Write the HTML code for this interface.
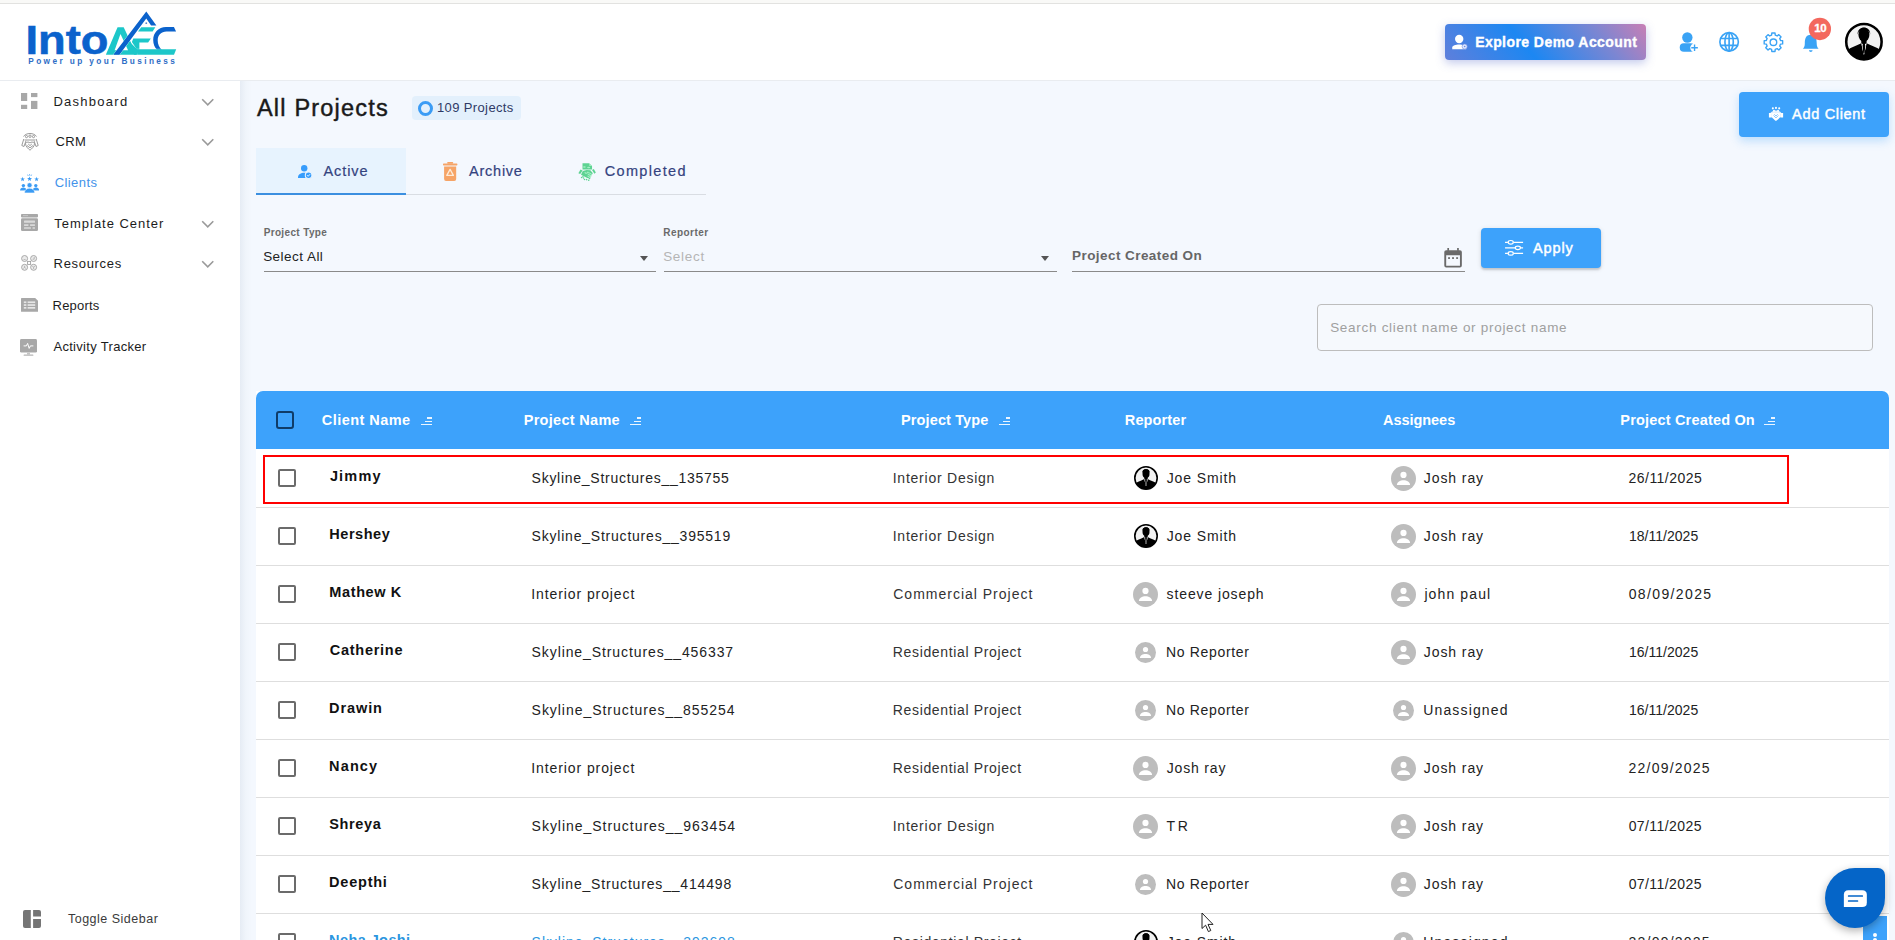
<!DOCTYPE html>
<html lang="en">
<head>
<meta charset="utf-8">
<title>All Projects</title>
<style>
*{box-sizing:border-box;margin:0;padding:0}
html,body{width:1895px;height:940px;overflow:hidden;background:#f4f8fe;font-family:"Liberation Sans",sans-serif;}
.abs{position:absolute}
.tx{position:absolute;white-space:nowrap;height:20px;line-height:20px;}
#topstrip{left:0;top:0;width:1895px;height:4px;background:#f9f9f7;border-bottom:1px solid #e2e2e0}
#header{left:0;top:4px;width:1895px;height:77px;background:#fff;border-bottom:1px solid #e9ecf0}
#sidebar{left:0;top:81px;width:240px;height:859px;background:#fff}
#sideshadow{left:240px;top:81px;width:12px;height:859px;background:linear-gradient(90deg,#e6ecf4 0%,#f0f5fb 50%,#f4f8fe 100%)}
#rightstrip{left:1889px;top:81px;width:6px;height:859px;background:#eef3f9}
.tx{white-space:pre}
#tbl{left:256px;top:391px;width:1633px;height:549px;background:#fff}
#thead{left:256px;top:391px;width:1633px;height:58px;background:#3da2fb;border-radius:7px 7px 0 0}
.rl{position:absolute;left:256px;width:1633px;height:1px;background:#dedede}
.cb{position:absolute;width:18px;height:18px;border:2px solid #6b6b6b;border-radius:2px;background:#fff}
.btn{position:absolute;background:#3da2fb;border-radius:4px;box-shadow:0 2px 6px rgba(62,161,250,.35)}
.ul{position:absolute;height:1px;background:#8a8a8a}
.av{position:absolute;width:26px;height:26px}

</style>
</head>
<body>
<div class="abs" id="topstrip"></div>
<div class="abs" id="header"></div>
<div class="abs" id="sidebar"></div>
<div class="abs" id="sideshadow"></div>
<svg class="abs" style="left:20px;top:5px" width="170" height="70" viewBox="0 0 1895 780" ><text x="62" y="551" font-family="Liberation Sans" font-weight="700" font-size="452" fill="#0b62cc" stroke="#0b62cc" stroke-width="6" textLength="925" lengthAdjust="spacingAndGlyphs">Into</text><text x="92" y="660" font-family="Liberation Sans" font-weight="700" font-size="92" fill="#2f6ec6" textLength="1635" lengthAdjust="spacing">Power up your Business</text></svg><svg class="abs" style="left:100px;top:8px" width="80" height="50" viewBox="0 0 1504 940" ><polygon points="110,880 330,360 445,360 690,880" fill="#1cc7c9"/><polygon points="275,795 385,490 528,795" fill="#fff"/><polygon points="775,360 1040,360 990,440 715,440" fill="#1cc7c9"/><polygon points="625,575 955,575 905,650 740,650 740,790 700,790 600,640" fill="#1cc7c9"/><path d="M1390,355 L1240,355 C1100,355 1000,460 1000,600 C1000,680 1030,740 1075,790 L1165,790 C1115,740 1085,680 1085,610 C1085,510 1150,443 1250,443 L1430,443 Z" fill="#0b62cc"/><polygon points="690,775 1432,775 1392,880 700,880" fill="#1cc7c9" stroke="#fff" stroke-width="10" paint-order="stroke"/><polygon points="560,640 700,775 700,880 640,880" fill="#1cc7c9"/><polygon points="250,880 870,65 1060,330 960,330 870,198 365,880" fill="#0b62cc" stroke="#fff" stroke-width="12" paint-order="stroke"/><circle cx="870" cy="285" r="17" fill="#5a86cc"/></svg>
<div class="abs" style="left:1445px;top:24px;width:201px;height:36px;border-radius:4px;background:linear-gradient(51deg,#5f7fdb 0%,#1c87f2 40%,#7c86d2 76%,#c87fb5 100%);box-shadow:0 3px 10px rgba(80,100,200,.35)"></div>
<svg class="abs" style="left:1440px;top:15px" width="220" height="55" viewBox="0 0 1895 474" ><circle cx="165" cy="207" r="36" fill="#fff"/><path d="M105,295 V280 C105,245 225,245 225,280 V295Z" fill="#fff"/><circle cx="212" cy="272" r="22" fill="#dfe8ff" stroke="#6d8be0" stroke-width="5"/><circle cx="212" cy="272" r="7" fill="#6d8be0"/></svg>
<svg class="abs" style="left:1655px;top:10px" width="240" height="70" viewBox="0 0 1895 553" ><circle cx="255" cy="217" r="41" fill="#3aa3f5"/><rect x="195" y="262" width="118" height="68" rx="32" fill="#3aa3f5"/><circle cx="312" cy="298" r="34" fill="#fff"/><path d="M312,272 V324 M286,298 H338" stroke="#3aa3f5" stroke-width="11" fill="none"/><g fill="none" stroke="#3aa3f5" stroke-width="13"><circle cx="585" cy="252" r="73"/><ellipse cx="585" cy="252" rx="33" ry="73"/><path d="M585,179 V325 M515,225 H655 M515,280 H655"/></g><path d="M922.3,182.1 L947.7,182.1 L949.4,198.8 L964.5,205.1 L977.6,194.5 L995.5,212.4 L984.9,225.5 L991.2,240.6 L1007.9,242.3 L1007.9,267.7 L991.2,269.4 L984.9,284.5 L995.5,297.6 L977.6,315.5 L964.5,304.9 L949.4,311.2 L947.7,327.9 L922.3,327.9 L920.6,311.2 L905.5,304.9 L892.4,315.5 L874.5,297.6 L885.1,284.5 L878.8,269.4 L862.1,267.7 L862.1,242.3 L878.8,240.6 L885.1,225.5 L874.5,212.4 L892.4,194.5 L905.5,205.1 L920.6,198.8Z" fill="none" stroke="#3aa3f5" stroke-width="11" stroke-linejoin="round"/><circle cx="935" cy="255" r="26" fill="none" stroke="#3aa3f5" stroke-width="11"/><path d="M1230,195 C1190,195 1183,230 1183,262 C1183,285 1178,295 1168,307 H1292 C1282,295 1277,285 1277,262 C1277,230 1270,195 1230,195 Z" fill="#3aa3f5"/><path d="M1216,318 H1244 C1244,336 1216,336 1216,318Z" fill="#3aa3f5"/><circle cx="1302" cy="150" r="88" fill="#f3685e"/><clipPath id="c1"><circle cx="1650" cy="250" r="139.9"/></clipPath><circle cx="1650" cy="250" r="139.9" fill="#f2f2f2"/><g clip-path="url(#c1)"><ellipse cx="1650" cy="196.0" rx="43.5" ry="55.5" fill="#000"/><path d="M1600.5,193.0 C1596.0,121.0 1704.0,121.0 1699.5,193.0 L1690.5,167.5 L1609.5,167.5Z" fill="#000"/><rect x="1629.0" y="238.0" width="42.0" height="45.0" fill="#000"/><path d="M1629.0,262.0 L1599.0,277.0 L1545.0,301.0 C1524.0,310.0 1515.0,340.0 1515.0,400.0 L1785.0,400.0 C1785.0,340.0 1776.0,310.0 1755.0,301.0 L1701.0,277.0 L1671.0,262.0 L1650.0,355.0Z" fill="#000"/><path d="M1629.0,262.0 L1647.0,349.0 L1653.0,349.0 L1671.0,262.0 L1659.0,268.0 L1650.0,310.0 L1641.0,268.0Z" fill="#fff"/><path d="M1642.5,268.0 L1657.5,268.0 L1660.5,283.0 L1656.0,337.0 L1650.0,349.0 L1644.0,337.0 L1639.5,283.0Z" fill="#000"/></g><circle cx="1650" cy="250" r="139.9" fill="none" stroke="#000" stroke-width="20.2"/></svg>
<svg class="abs" style="left:21px;top:93px" width="17" height="16" viewBox="0 0 17 16" ><rect x="0" y="0" width="6.2" height="8" fill="#a8a8a8"/><rect x="0" y="11.8" width="6.2" height="4.2" fill="#a8a8a8"/><rect x="10" y="0" width="6.4" height="4.1" fill="#a8a8a8"/><rect x="10" y="7.9" width="6.4" height="8.1" fill="#a8a8a8"/></svg>
<svg class="abs" style="left:21px;top:131px" width="18" height="21" viewBox="0 0 18 21" ><g fill="none" stroke="#8f8f8f" stroke-width="0.9"><path d="M2.5,5.5 C5,1.5 13,1.5 15.5,5.5"/><circle cx="5.5" cy="5.6" r="1.1"/><circle cx="9" cy="5.2" r="1.2"/><circle cx="12.5" cy="5.6" r="1.1"/><path d="M3.6,9 H14.4"/><path d="M2.8,8 L0.8,14.5 L3,15.5 L5,9.8 M15.2,8 L17.2,14.5 L15,15.5 L13,9.8"/><path d="M4.5,12.5 C6,10.5 8,10.8 9,12 C10,10.8 12,10.5 13.5,12.5 C13.5,15.5 10.5,18 9,19.2 C7.5,18 4.5,15.5 4.5,12.5Z"/><path d="M6,14.5 L9,16.8 L12,14.5 M7.2,13 L9,14.6 L10.8,13"/></g></svg>
<svg class="abs" style="left:20px;top:173.7px" width="19.2" height="19" viewBox="0 0 19.2 19" ><polygon points="2.60,2.80 3.19,4.38 4.88,4.46 3.56,5.51 4.01,7.14 2.60,6.21 1.19,7.14 1.64,5.51 0.32,4.46 2.01,4.38" fill="#3a9bf4"/><polygon points="9.60,2.40 10.24,4.12 12.07,4.20 10.64,5.34 11.13,7.10 9.60,6.09 8.07,7.10 8.56,5.34 7.13,4.20 8.96,4.12" fill="#3a9bf4"/><polygon points="16.60,2.80 17.19,4.38 18.88,4.46 17.56,5.51 18.01,7.14 16.60,6.21 15.19,7.14 15.64,5.51 14.32,4.46 16.01,4.38" fill="#3a9bf4"/><path d="M9.6,0 V1.6 M7.6,0.6 L8.3,2 M11.6,0.6 L10.9,2" stroke="#3a9bf4" stroke-width="0.7" fill="none"/><circle cx="3.4" cy="11.6" r="1.7" fill="#3a9bf4"/><path d="M0,16.6 C0,12.6 6.6,12.6 6.6,16.6Z" fill="#3a9bf4"/><circle cx="15.8" cy="11.6" r="1.7" fill="#3a9bf4"/><path d="M12.6,16.6 C12.6,12.6 19.2,12.6 19.2,16.6Z" fill="#3a9bf4"/><circle cx="9.6" cy="11.2" r="2.5" fill="#3a9bf4" stroke="#fff" stroke-width="0.6"/><path d="M4.4,19 C4.4,12.6 14.8,12.6 14.8,19Z" fill="#3a9bf4" stroke="#fff" stroke-width="0.6"/></svg>
<svg class="abs" style="left:20.6px;top:214px" width="17" height="17" viewBox="0 0 17 17" ><rect x="0" y="0" width="17" height="3.4" rx="0.8" fill="#a8a8a8"/><rect x="2" y="1.2" width="5" height="0.9" fill="#c9c9c9"/><rect x="0" y="4.3" width="17" height="12.7" rx="1.2" fill="#a8a8a8"/><rect x="3" y="6.6" width="11" height="2.2" rx="0.5" fill="#d9d9d9"/><rect x="3" y="10.2" width="4.5" height="1.8" rx="0.4" fill="#d9d9d9"/><rect x="9" y="10.2" width="5" height="1.8" rx="0.4" fill="#d9d9d9"/><rect x="3" y="13.2" width="7" height="1.6" rx="0.4" fill="#d9d9d9"/><rect x="11.5" y="13.2" width="2.5" height="1.6" rx="0.4" fill="#d9d9d9"/></svg>
<svg class="abs" style="left:21px;top:255px" width="17" height="16" viewBox="0 0 17 16" ><g fill="#ececec" stroke="#a0a0a0" stroke-width="0.9"><circle cx="3.6" cy="3.5" r="3"/><circle cx="12.6" cy="3.5" r="3"/><circle cx="3.6" cy="12.3" r="3"/><circle cx="12.6" cy="12.3" r="3"/><rect x="6.6" y="6.4" width="3" height="3" fill="#fff"/></g><g stroke="#a0a0a0" stroke-width="0.7" fill="none"><path d="M2.4,3 h0.1 M4.6,3 h0.1 M2.6,4.6 h2"/><path d="M13.2,2 v2.2 h-1.6"/><path d="M3.6,10.8 v1.6 l-1.3,1 M3.6,12.4 l1.3,1"/><path d="M11.4,11 l1.2,1.4 l1.2,-1.4 M12.6,12.4 v1.6"/></g></svg>
<svg class="abs" style="left:21px;top:298.3px" width="17.2" height="13.8" viewBox="0 0 17.2 13.8" ><path d="M0.6,0 H14.2 L17.2,3 V13.2 Q17.2,13.8 16.6,13.8 H0.6 Q0,13.8 0,13.2 V0.6 Q0,0 0.6,0Z" fill="#a8a8a8"/><g fill="#e6e6e6"><rect x="2.8" y="3.4" width="2.6" height="1.7"/><rect x="6.6" y="3.4" width="7.6" height="1.7"/><rect x="2.8" y="6.2" width="2.6" height="1.7"/><rect x="6.6" y="6.2" width="7.6" height="1.7"/><rect x="2.8" y="9" width="2.6" height="1.7"/><rect x="6.6" y="9" width="7.6" height="1.7"/></g></svg>
<svg class="abs" style="left:20.2px;top:338.6px" width="17.2" height="17.2" viewBox="0 0 17.2 17.2" ><rect x="0" y="0" width="17" height="13.6" rx="1.4" fill="#a8a8a8"/><path d="M3.6,6.9 H6.4 L7.6,4.4 L9.2,9.4 L10.4,6.9 H13.4" stroke="#fff" stroke-width="1" fill="none" stroke-linejoin="round"/><rect x="7" y="13.6" width="3" height="2" fill="#c4c4c4"/><rect x="3.6" y="15.6" width="9.8" height="1.2" rx="0.5" fill="#b5b5b5"/></svg>
<svg class="abs" style="left:200.9px;top:98.0px" width="13.5" height="8.4" viewBox="0 0 13.5 8.4" ><path d="M1.2,1.2 L6.75,6.8 L12.3,1.2" fill="none" stroke="#9a9a9a" stroke-width="1.6"/></svg>
<svg class="abs" style="left:200.9px;top:138.0px" width="13.5" height="8.4" viewBox="0 0 13.5 8.4" ><path d="M1.2,1.2 L6.75,6.8 L12.3,1.2" fill="none" stroke="#9a9a9a" stroke-width="1.6"/></svg>
<svg class="abs" style="left:200.9px;top:220.0px" width="13.5" height="8.4" viewBox="0 0 13.5 8.4" ><path d="M1.2,1.2 L6.75,6.8 L12.3,1.2" fill="none" stroke="#9a9a9a" stroke-width="1.6"/></svg>
<svg class="abs" style="left:200.9px;top:260.0px" width="13.5" height="8.4" viewBox="0 0 13.5 8.4" ><path d="M1.2,1.2 L6.75,6.8 L12.3,1.2" fill="none" stroke="#9a9a9a" stroke-width="1.6"/></svg>
<svg class="abs" style="left:23px;top:910px" width="18" height="18" viewBox="0 0 18 18" ><path d="M2,0 H7.8 V18 H2 Q0,18 0,16 V2 Q0,0 2,0Z" fill="#757575"/><path d="M10.1,0 H16 Q18,0 18,2 V6.5 H10.1Z" fill="#757575"/><path d="M10.1,9 H18 V16 Q18,18 16,18 H10.1Z" fill="#757575"/></svg>
<div class="abs" id="tbl"></div><div class="abs" id="thead"></div>
<div class="rl" style="top:507px"></div>
<div class="rl" style="top:565px"></div>
<div class="rl" style="top:623px"></div>
<div class="rl" style="top:681px"></div>
<div class="rl" style="top:739px"></div>
<div class="rl" style="top:797px"></div>
<div class="rl" style="top:855px"></div>
<div class="rl" style="top:913px"></div>
<div class="cb" style="left:276px;top:411px;background:transparent;border-color:#0f3c68;border-radius:3px"></div>
<div class="cb" style="left:278px;top:469px"></div>
<div class="cb" style="left:278px;top:527px"></div>
<div class="cb" style="left:278px;top:585px"></div>
<div class="cb" style="left:278px;top:643px"></div>
<div class="cb" style="left:278px;top:701px"></div>
<div class="cb" style="left:278px;top:759px"></div>
<div class="cb" style="left:278px;top:817px"></div>
<div class="cb" style="left:278px;top:875px"></div>
<div class="cb" style="left:278px;top:933px"></div>
<div class="abs" style="left:420.6px;top:424.1px;width:11px;height:1.4px;background:#eaf5ff"></div><div class="abs" style="left:424.6px;top:420.70000000000005px;width:7px;height:1.4px;background:#eaf5ff"></div><div class="abs" style="left:427.3px;top:417.3px;width:4.3px;height:1.4px;background:#eaf5ff"></div>
<div class="abs" style="left:629.8px;top:424.1px;width:11px;height:1.4px;background:#eaf5ff"></div><div class="abs" style="left:633.8px;top:420.70000000000005px;width:7px;height:1.4px;background:#eaf5ff"></div><div class="abs" style="left:636.5px;top:417.3px;width:4.3px;height:1.4px;background:#eaf5ff"></div>
<div class="abs" style="left:999px;top:424.1px;width:11px;height:1.4px;background:#eaf5ff"></div><div class="abs" style="left:1003px;top:420.70000000000005px;width:7px;height:1.4px;background:#eaf5ff"></div><div class="abs" style="left:1005.7px;top:417.3px;width:4.3px;height:1.4px;background:#eaf5ff"></div>
<div class="abs" style="left:1764.3px;top:424.1px;width:11px;height:1.4px;background:#eaf5ff"></div><div class="abs" style="left:1768.3px;top:420.70000000000005px;width:7px;height:1.4px;background:#eaf5ff"></div><div class="abs" style="left:1771.0px;top:417.3px;width:4.3px;height:1.4px;background:#eaf5ff"></div>
<svg class="abs" style="left:1133.6px;top:466.2px" width="24" height="24" viewBox="1133.6 466.2 24 24" ><clipPath id="c2"><circle cx="1145.6" cy="478.2" r="11.2"/></clipPath><circle cx="1145.6" cy="478.2" r="11.2" fill="#f2f2f2"/><g clip-path="url(#c2)"><ellipse cx="1145.6" cy="473.9" rx="3.5" ry="4.4" fill="#000"/><path d="M1141.6,473.6 C1141.3,467.9 1149.9,467.9 1149.6,473.6 L1148.8,471.6 L1142.4,471.6Z" fill="#000"/><rect x="1143.9" y="477.2" width="3.4" height="3.6" fill="#000"/><path d="M1143.9,479.2 L1141.5,480.4 L1137.2,482.3 C1135.5,483.0 1134.8,485.4 1134.8,490.2 L1156.4,490.2 C1156.4,485.4 1155.7,483.0 1154.0,482.3 L1149.7,480.4 L1147.3,479.2 L1145.6,486.6Z" fill="#000"/><path d="M1143.9,479.2 L1145.4,486.1 L1145.8,486.1 L1147.3,479.2 L1146.3,479.6 L1145.6,483.0 L1144.9,479.6Z" fill="#fff"/><path d="M1145.0,479.6 L1146.2,479.6 L1146.4,480.8 L1146.1,485.2 L1145.6,486.1 L1145.1,485.2 L1144.8,480.8Z" fill="#000"/></g><circle cx="1145.6" cy="478.2" r="11.2" fill="none" stroke="#000" stroke-width="1.6"/></svg>
<svg class="abs" style="left:1391.0px;top:466.0px" width="25" height="25" viewBox="1391.0 466.0 25 25" ><circle cx="1403.5" cy="478.5" r="12.5" fill="#bdbdbd"/><circle cx="1403.5" cy="474.90" r="3.10" fill="#fff"/><path d="M1396.90,485.10 C1396.90,478.70 1410.10,478.70 1410.10,485.10Z" fill="#fff"/></svg>
<svg class="abs" style="left:1133.6px;top:524.2px" width="24" height="24" viewBox="1133.6 524.2 24 24" ><clipPath id="c3"><circle cx="1145.6" cy="536.2" r="11.2"/></clipPath><circle cx="1145.6" cy="536.2" r="11.2" fill="#f2f2f2"/><g clip-path="url(#c3)"><ellipse cx="1145.6" cy="531.9" rx="3.5" ry="4.4" fill="#000"/><path d="M1141.6,531.6 C1141.3,525.9 1149.9,525.9 1149.6,531.6 L1148.8,529.6 L1142.4,529.6Z" fill="#000"/><rect x="1143.9" y="535.2" width="3.4" height="3.6" fill="#000"/><path d="M1143.9,537.2 L1141.5,538.4 L1137.2,540.3 C1135.5,541.0 1134.8,543.4 1134.8,548.2 L1156.4,548.2 C1156.4,543.4 1155.7,541.0 1154.0,540.3 L1149.7,538.4 L1147.3,537.2 L1145.6,544.6Z" fill="#000"/><path d="M1143.9,537.2 L1145.4,544.1 L1145.8,544.1 L1147.3,537.2 L1146.3,537.6 L1145.6,541.0 L1144.9,537.6Z" fill="#fff"/><path d="M1145.0,537.6 L1146.2,537.6 L1146.4,538.8 L1146.1,543.2 L1145.6,544.1 L1145.1,543.2 L1144.8,538.8Z" fill="#000"/></g><circle cx="1145.6" cy="536.2" r="11.2" fill="none" stroke="#000" stroke-width="1.6"/></svg>
<svg class="abs" style="left:1391.0px;top:524.0px" width="25" height="25" viewBox="1391.0 524.0 25 25" ><circle cx="1403.5" cy="536.5" r="12.5" fill="#bdbdbd"/><circle cx="1403.5" cy="532.90" r="3.10" fill="#fff"/><path d="M1396.90,543.10 C1396.90,536.70 1410.10,536.70 1410.10,543.10Z" fill="#fff"/></svg>
<svg class="abs" style="left:1133.0px;top:582.0px" width="25" height="25" viewBox="1133.0 582.0 25 25" ><circle cx="1145.5" cy="594.5" r="12.5" fill="#bdbdbd"/><circle cx="1145.5" cy="590.90" r="3.10" fill="#fff"/><path d="M1138.90,601.10 C1138.90,594.70 1152.10,594.70 1152.10,601.10Z" fill="#fff"/></svg>
<svg class="abs" style="left:1391.0px;top:582.0px" width="25" height="25" viewBox="1391.0 582.0 25 25" ><circle cx="1403.5" cy="594.5" r="12.5" fill="#bdbdbd"/><circle cx="1403.5" cy="590.90" r="3.10" fill="#fff"/><path d="M1396.90,601.10 C1396.90,594.70 1410.10,594.70 1410.10,601.10Z" fill="#fff"/></svg>
<svg class="abs" style="left:1135.0px;top:642.0px" width="21" height="21" viewBox="1135.0 642.0 21 21" ><circle cx="1145.5" cy="652.5" r="10.5" fill="#bdbdbd"/><circle cx="1145.5" cy="649.48" r="2.60" fill="#fff"/><path d="M1139.96,658.04 C1139.96,652.67 1151.04,652.67 1151.04,658.04Z" fill="#fff"/></svg>
<svg class="abs" style="left:1391.0px;top:640.0px" width="25" height="25" viewBox="1391.0 640.0 25 25" ><circle cx="1403.5" cy="652.5" r="12.5" fill="#bdbdbd"/><circle cx="1403.5" cy="648.90" r="3.10" fill="#fff"/><path d="M1396.90,659.10 C1396.90,652.70 1410.10,652.70 1410.10,659.10Z" fill="#fff"/></svg>
<svg class="abs" style="left:1135.0px;top:700.0px" width="21" height="21" viewBox="1135.0 700.0 21 21" ><circle cx="1145.5" cy="710.5" r="10.5" fill="#bdbdbd"/><circle cx="1145.5" cy="707.48" r="2.60" fill="#fff"/><path d="M1139.96,716.04 C1139.96,710.67 1151.04,710.67 1151.04,716.04Z" fill="#fff"/></svg>
<svg class="abs" style="left:1393.0px;top:700.0px" width="21" height="21" viewBox="1393.0 700.0 21 21" ><circle cx="1403.5" cy="710.5" r="10.5" fill="#bdbdbd"/><circle cx="1403.5" cy="707.48" r="2.60" fill="#fff"/><path d="M1397.96,716.04 C1397.96,710.67 1409.04,710.67 1409.04,716.04Z" fill="#fff"/></svg>
<svg class="abs" style="left:1133.0px;top:756.0px" width="25" height="25" viewBox="1133.0 756.0 25 25" ><circle cx="1145.5" cy="768.5" r="12.5" fill="#bdbdbd"/><circle cx="1145.5" cy="764.90" r="3.10" fill="#fff"/><path d="M1138.90,775.10 C1138.90,768.70 1152.10,768.70 1152.10,775.10Z" fill="#fff"/></svg>
<svg class="abs" style="left:1391.0px;top:756.0px" width="25" height="25" viewBox="1391.0 756.0 25 25" ><circle cx="1403.5" cy="768.5" r="12.5" fill="#bdbdbd"/><circle cx="1403.5" cy="764.90" r="3.10" fill="#fff"/><path d="M1396.90,775.10 C1396.90,768.70 1410.10,768.70 1410.10,775.10Z" fill="#fff"/></svg>
<svg class="abs" style="left:1133.0px;top:814.0px" width="25" height="25" viewBox="1133.0 814.0 25 25" ><circle cx="1145.5" cy="826.5" r="12.5" fill="#bdbdbd"/><circle cx="1145.5" cy="822.90" r="3.10" fill="#fff"/><path d="M1138.90,833.10 C1138.90,826.70 1152.10,826.70 1152.10,833.10Z" fill="#fff"/></svg>
<svg class="abs" style="left:1391.0px;top:814.0px" width="25" height="25" viewBox="1391.0 814.0 25 25" ><circle cx="1403.5" cy="826.5" r="12.5" fill="#bdbdbd"/><circle cx="1403.5" cy="822.90" r="3.10" fill="#fff"/><path d="M1396.90,833.10 C1396.90,826.70 1410.10,826.70 1410.10,833.10Z" fill="#fff"/></svg>
<svg class="abs" style="left:1135.0px;top:874.0px" width="21" height="21" viewBox="1135.0 874.0 21 21" ><circle cx="1145.5" cy="884.5" r="10.5" fill="#bdbdbd"/><circle cx="1145.5" cy="881.48" r="2.60" fill="#fff"/><path d="M1139.96,890.04 C1139.96,884.67 1151.04,884.67 1151.04,890.04Z" fill="#fff"/></svg>
<svg class="abs" style="left:1391.0px;top:872.0px" width="25" height="25" viewBox="1391.0 872.0 25 25" ><circle cx="1403.5" cy="884.5" r="12.5" fill="#bdbdbd"/><circle cx="1403.5" cy="880.90" r="3.10" fill="#fff"/><path d="M1396.90,891.10 C1396.90,884.70 1410.10,884.70 1410.10,891.10Z" fill="#fff"/></svg>
<svg class="abs" style="left:1133.6px;top:930.2px" width="24" height="24" viewBox="1133.6 930.2 24 24" ><clipPath id="c4"><circle cx="1145.6" cy="942.2" r="11.2"/></clipPath><circle cx="1145.6" cy="942.2" r="11.2" fill="#f2f2f2"/><g clip-path="url(#c4)"><ellipse cx="1145.6" cy="937.9" rx="3.5" ry="4.4" fill="#000"/><path d="M1141.6,937.6 C1141.3,931.9 1149.9,931.9 1149.6,937.6 L1148.8,935.6 L1142.4,935.6Z" fill="#000"/><rect x="1143.9" y="941.2" width="3.4" height="3.6" fill="#000"/><path d="M1143.9,943.2 L1141.5,944.4 L1137.2,946.3 C1135.5,947.0 1134.8,949.4 1134.8,954.2 L1156.4,954.2 C1156.4,949.4 1155.7,947.0 1154.0,946.3 L1149.7,944.4 L1147.3,943.2 L1145.6,950.6Z" fill="#000"/><path d="M1143.9,943.2 L1145.4,950.1 L1145.8,950.1 L1147.3,943.2 L1146.3,943.6 L1145.6,947.0 L1144.9,943.6Z" fill="#fff"/><path d="M1145.0,943.6 L1146.2,943.6 L1146.4,944.8 L1146.1,949.2 L1145.6,950.1 L1145.1,949.2 L1144.8,944.8Z" fill="#000"/></g><circle cx="1145.6" cy="942.2" r="11.2" fill="none" stroke="#000" stroke-width="1.6"/></svg>
<svg class="abs" style="left:1393.0px;top:932.0px" width="21" height="21" viewBox="1393.0 932.0 21 21" ><circle cx="1403.5" cy="942.5" r="10.5" fill="#bdbdbd"/><circle cx="1403.5" cy="939.48" r="2.60" fill="#fff"/><path d="M1397.96,948.04 C1397.96,942.67 1409.04,942.67 1409.04,948.04Z" fill="#fff"/></svg>
<div class="abs" style="left:263px;top:455px;width:1526px;height:49px;border:2px solid #f00"></div>
<div class="btn" style="left:1739px;top:92px;width:150px;height:45px;box-shadow:0 4px 10px rgba(62,161,250,.3)"></div>
<svg class="abs" style="left:1730px;top:85px" width="165" height="60" viewBox="0 0 1895 689" ><circle cx="492" cy="268" r="12" fill="#fff"/><circle cx="528" cy="263" r="12" fill="#fff"/><circle cx="565" cy="268" r="12" fill="#fff"/><circle cx="505" cy="296" r="11" fill="#fff"/><circle cx="552" cy="296" r="11" fill="#fff"/><path d="M462,334 C462,305 500,292 528,292 C556,292 594,305 594,334Z" fill="#fff" opacity="0.85"/><path d="M447,322 H480 V372 H447Z M577,322 H610 V372 H577Z" fill="#fff"/><path d="M478,330 C500,312 515,318 528,330 C541,318 556,312 578,330 L582,362 C565,385 545,402 528,414 C511,402 491,385 474,362Z" fill="#fff"/><path d="M500,350 L528,378 L556,350 M508,336 L528,356 L548,336" stroke="#3da2fb" stroke-width="7" fill="none"/></svg>
<div class="btn" style="left:1481px;top:228px;width:120px;height:40px;box-shadow:0 2px 2px rgba(0,0,0,.14),0 1px 5px rgba(0,0,0,.12)"></div>
<svg class="abs" style="left:1430px;top:220px" width="180" height="60" viewBox="0 0 1895 632" ><g stroke="#fff" stroke-width="13" fill="none"><path d="M790,235 H820 M880,235 H980"/><ellipse cx="850" cy="235" rx="27" ry="19" fill="#3da2fb"/><path d="M790,293 H895 M955,293 H980"/><ellipse cx="925" cy="293" rx="27" ry="19" fill="#3da2fb"/><path d="M790,352 H820 M880,352 H980"/><ellipse cx="850" cy="352" rx="27" ry="19" fill="#3da2fb"/></g><path d="M170,318 H315 Q335,318 335,338 V480 Q335,500 315,500 H170 Q150,500 150,480 V338 Q150,318 170,318Z M170,372 V482 H315 V372Z" fill="#6a6a6a" fill-rule="evenodd"/><rect x="182" y="295" width="18" height="30" fill="#6a6a6a"/><rect x="285" y="295" width="18" height="30" fill="#6a6a6a"/><rect x="190" y="392" width="20" height="18" fill="#6a6a6a"/><rect x="232" y="392" width="20" height="18" fill="#6a6a6a"/><rect x="275" y="392" width="20" height="18" fill="#6a6a6a"/></svg>
<div class="abs" style="left:412px;top:96px;width:109px;height:23.5px;border-radius:4px;background:#e3f0fc"></div>
<div class="abs" style="left:417.5px;top:100.5px;width:15px;height:15px;border-radius:50%;border:3.2px solid #3b9cf5"></div>
<div class="abs" style="left:256px;top:148px;width:150px;height:47px;background:#e7f3fe"></div>
<div class="abs" style="left:256px;top:194px;width:450px;height:1px;background:#d9dde3"></div>
<div class="abs" style="left:256px;top:192.5px;width:150px;height:2.8px;background:#3b8fe0"></div>
<svg class="abs" style="left:298px;top:165.2px" width="14" height="13.4" viewBox="0 0 14 13.4" ><circle cx="6.2" cy="3.3" r="3.2" fill="#369cfc"/><path d="M0,12.2 C0,6.2 12.4,6.2 12.4,12.2 V13 H0Z" fill="#369cfc"/><circle cx="10.6" cy="10.2" r="3.3" fill="#369cfc" stroke="#e7f3fe" stroke-width="1.1"/><path d="M9.1,10.2 L10.2,11.3 L12.1,9.2" stroke="#fff" stroke-width="0.9" fill="none"/></svg>
<svg class="abs" style="left:443px;top:161.8px" width="14.6" height="19" viewBox="0 0 14.6 19" ><rect x="0" y="1.4" width="14.4" height="2" rx="0.7" fill="#f6a467"/><rect x="4.2" y="0" width="6" height="1.8" rx="0.7" fill="#f6a467"/><path d="M1.1,4.4 H13.2 V17 Q13.2,18.9 11.3,18.9 H3 Q1.1,18.9 1.1,17Z" fill="#f6a467"/><path d="M7.1,7.4 L10.4,13.4 H3.8Z" fill="none" stroke="#fdebd8" stroke-width="1.3" stroke-linejoin="round"/></svg>
<svg class="abs" style="left:570px;top:156px" width="40" height="30" viewBox="0 0 1253 940" ><path d="M392,225 H600 L690,315 V420 H392Z" fill="#5ed392"/><path d="M605,235 L680,310 H605Z" fill="#a6efc6"/><ellipse cx="450" cy="345" rx="45" ry="22" fill="#a6efc6"/><ellipse cx="585" cy="360" rx="50" ry="22" fill="#a6efc6"/><path d="M330,425 L395,455 L320,565 L262,540Z" fill="#5ed392"/><path d="M745,405 L810,520 L765,560 L690,440Z" fill="#5ed392"/><path d="M400,470 L520,440 L640,450 L715,540 L600,700 L540,690 L345,585Z" fill="#5ed392"/><path d="M470,520 C500,560 540,540 560,500 M590,520 L680,575 M570,570 L660,625 M560,630 L640,680" stroke="#a6efc6" stroke-width="34" fill="none" stroke-linecap="round"/><g fill="#5ed392"><circle cx="365" cy="675" r="26"/><circle cx="405" cy="640" r="22"/><circle cx="425" cy="690" r="24"/><circle cx="455" cy="735" r="24"/><circle cx="520" cy="740" r="24"/><circle cx="585" cy="760" r="26"/><circle cx="610" cy="705" r="24"/></g></svg>
<div class="ul" style="left:264px;top:270.5px;width:391.5px"></div>
<div class="ul" style="left:664px;top:270.5px;width:393px"></div>
<div class="ul" style="left:1072px;top:271px;width:393px"></div>
<div class="abs" style="left:639.5px;top:255.6px;width:0;height:0;border-left:4.5px solid transparent;border-right:4.5px solid transparent;border-top:5px solid #555"></div>
<div class="abs" style="left:1040.5px;top:255.6px;width:0;height:0;border-left:4.5px solid transparent;border-right:4.5px solid transparent;border-top:5px solid #555"></div>
<div class="abs" style="left:1317px;top:304px;width:556px;height:47px;border:1px solid #bdbdbd;border-radius:4px;background:#f6f9fd"></div>
<div class="tx" style="left:53.38px;top:92.00px;font-size:13px;font-weight:400;color:#1c1c1c;letter-spacing:1.269px">Dashboard</div>
<div class="tx" style="left:55.45px;top:132.00px;font-size:13px;font-weight:400;color:#1c1c1c;letter-spacing:0.421px">CRM</div>
<div class="tx" style="left:54.64px;top:173.00px;font-size:13px;font-weight:400;color:#4393ea;letter-spacing:0.434px">Clients</div>
<div class="tx" style="left:54.33px;top:214.00px;font-size:13px;font-weight:400;color:#1c1c1c;letter-spacing:0.977px">Template Center</div>
<div class="tx" style="left:53.62px;top:254.00px;font-size:13px;font-weight:400;color:#1c1c1c;letter-spacing:0.677px">Resources</div>
<div class="tx" style="left:52.62px;top:296.00px;font-size:13px;font-weight:400;color:#1c1c1c;letter-spacing:0.196px">Reports</div>
<div class="tx" style="left:53.41px;top:337.00px;font-size:13px;font-weight:400;color:#1c1c1c;letter-spacing:0.308px">Activity Tracker</div>
<div class="tx" style="left:67.94px;top:909.00px;font-size:12.5px;font-weight:400;color:#3a3a3a;letter-spacing:0.500px">Toggle Sidebar</div>
<div class="tx" style="left:1475.13px;top:32.00px;font-size:14px;font-weight:700;color:#ffffff;letter-spacing:0.438px;-webkit-text-stroke:0.35px #ffffff">Explore Demo Account</div>
<div class="tx" style="left:1814.34px;top:18.00px;font-size:11.5px;font-weight:700;color:#ffffff;letter-spacing:-0.490px;-webkit-text-stroke:0.3px #ffffff">10</div>
<div class="tx" style="left:257.00px;top:98.00px;font-size:23.5px;font-weight:400;color:#1a1a1a;letter-spacing:1.194px;-webkit-text-stroke:0.45px #1a1a1a">All Projects</div>
<div class="tx" style="left:436.99px;top:98.00px;font-size:13px;font-weight:400;color:#2f3a66;letter-spacing:0.372px">109 Projects</div>
<div class="tx" style="left:1792.05px;top:104.00px;font-size:14.5px;font-weight:400;color:#ffffff;letter-spacing:0.689px;-webkit-text-stroke:0.45px #ffffff">Add Client</div>
<div class="tx" style="left:323.39px;top:161.00px;font-size:14.5px;font-weight:400;color:#34437f;letter-spacing:0.935px;-webkit-text-stroke:0.2px #34437f">Active</div>
<div class="tx" style="left:469.09px;top:161.00px;font-size:14.5px;font-weight:400;color:#34437f;letter-spacing:0.747px;-webkit-text-stroke:0.2px #34437f">Archive</div>
<div class="tx" style="left:604.69px;top:161.00px;font-size:14.5px;font-weight:400;color:#34437f;letter-spacing:1.332px;-webkit-text-stroke:0.2px #34437f">Completed</div>
<div class="tx" style="left:263.63px;top:223.00px;font-size:10px;font-weight:700;color:#6a6a6a;letter-spacing:0.359px">Project Type</div>
<div class="tx" style="left:263.17px;top:247.00px;font-size:13.5px;font-weight:400;color:#222;letter-spacing:0.461px">Select All</div>
<div class="tx" style="left:663.32px;top:223.00px;font-size:10px;font-weight:700;color:#6a6a6a;letter-spacing:0.451px">Reporter</div>
<div class="tx" style="left:663.17px;top:247.00px;font-size:13.5px;font-weight:400;color:#b5b5b5;letter-spacing:0.691px">Select</div>
<div class="tx" style="left:1072.01px;top:246.00px;font-size:13.5px;font-weight:700;color:#666;letter-spacing:0.437px">Project Created On</div>
<div class="tx" style="left:1533.05px;top:238.00px;font-size:14.5px;font-weight:400;color:#ffffff;letter-spacing:0.867px;-webkit-text-stroke:0.45px #ffffff">Apply</div>
<div class="tx" style="left:1330.17px;top:318.00px;font-size:13.5px;font-weight:400;color:#a0a0a0;letter-spacing:0.707px">Search client name or project name</div>
<div class="tx" style="left:321.87px;top:410.00px;font-size:14.5px;font-weight:700;color:#fff;letter-spacing:0.451px">Client Name</div>
<div class="tx" style="left:523.72px;top:410.00px;font-size:14.5px;font-weight:700;color:#fff;letter-spacing:0.296px">Project Name</div>
<div class="tx" style="left:901.01px;top:410.00px;font-size:14.5px;font-weight:700;color:#fff;letter-spacing:0.128px">Project Type</div>
<div class="tx" style="left:1124.83px;top:410.00px;font-size:14.5px;font-weight:700;color:#fff;letter-spacing:0.112px">Reporter</div>
<div class="tx" style="left:1383.04px;top:410.00px;font-size:14.5px;font-weight:700;color:#fff;letter-spacing:-0.045px">Assignees</div>
<div class="tx" style="left:1620.37px;top:410.00px;font-size:14.5px;font-weight:700;color:#fff;letter-spacing:0.176px">Project Created On</div>
<div class="tx" style="left:329.89px;top:466.00px;font-size:14.5px;font-weight:700;color:#111;letter-spacing:1.182px">Jimmy</div>
<div class="tx" style="left:531.60px;top:468.00px;font-size:14px;font-weight:400;color:#222;letter-spacing:0.731px">Skyline_Structures__135755</div>
<div class="tx" style="left:892.73px;top:468.00px;font-size:14px;font-weight:400;color:#333;letter-spacing:0.759px">Interior Design</div>
<div class="tx" style="left:1166.73px;top:468.00px;font-size:14px;font-weight:400;color:#222;letter-spacing:0.896px">Joe Smith</div>
<div class="tx" style="left:1423.82px;top:468.00px;font-size:14px;font-weight:400;color:#222;letter-spacing:0.912px">Josh ray</div>
<div class="tx" style="left:1628.57px;top:468.00px;font-size:14px;font-weight:400;color:#222;letter-spacing:0.460px">26/11/2025</div>
<div class="tx" style="left:329.33px;top:524.00px;font-size:14.5px;font-weight:700;color:#111;letter-spacing:0.538px">Hershey</div>
<div class="tx" style="left:531.60px;top:526.00px;font-size:14px;font-weight:400;color:#222;letter-spacing:0.784px">Skyline_Structures__395519</div>
<div class="tx" style="left:892.73px;top:526.00px;font-size:14px;font-weight:400;color:#333;letter-spacing:0.759px">Interior Design</div>
<div class="tx" style="left:1166.73px;top:526.00px;font-size:14px;font-weight:400;color:#222;letter-spacing:0.896px">Joe Smith</div>
<div class="tx" style="left:1423.82px;top:526.00px;font-size:14px;font-weight:400;color:#222;letter-spacing:0.912px">Josh ray</div>
<div class="tx" style="left:1628.91px;top:526.00px;font-size:14px;font-weight:400;color:#222;letter-spacing:0.028px">18/11/2025</div>
<div class="tx" style="left:329.33px;top:582.00px;font-size:14.5px;font-weight:700;color:#111;letter-spacing:0.615px">Mathew K</div>
<div class="tx" style="left:531.33px;top:584.00px;font-size:14px;font-weight:400;color:#222;letter-spacing:0.900px">Interior project</div>
<div class="tx" style="left:893.25px;top:584.00px;font-size:14px;font-weight:400;color:#333;letter-spacing:0.996px">Commercial Project</div>
<div class="tx" style="left:1166.58px;top:584.00px;font-size:14px;font-weight:400;color:#222;letter-spacing:0.889px">steeve joseph</div>
<div class="tx" style="left:1424.39px;top:584.00px;font-size:14px;font-weight:400;color:#222;letter-spacing:1.118px">john paul</div>
<div class="tx" style="left:1628.65px;top:584.00px;font-size:14px;font-weight:400;color:#222;letter-spacing:1.381px">08/09/2025</div>
<div class="tx" style="left:329.71px;top:640.00px;font-size:14.5px;font-weight:700;color:#111;letter-spacing:0.740px">Catherine</div>
<div class="tx" style="left:531.60px;top:642.00px;font-size:14px;font-weight:400;color:#222;letter-spacing:0.901px">Skyline_Structures__456337</div>
<div class="tx" style="left:892.80px;top:642.00px;font-size:14px;font-weight:400;color:#333;letter-spacing:0.644px">Residential Project</div>
<div class="tx" style="left:1166.06px;top:642.00px;font-size:14px;font-weight:400;color:#222;letter-spacing:0.659px">No Reporter</div>
<div class="tx" style="left:1423.82px;top:642.00px;font-size:14px;font-weight:400;color:#222;letter-spacing:0.912px">Josh ray</div>
<div class="tx" style="left:1628.91px;top:642.00px;font-size:14px;font-weight:400;color:#222;letter-spacing:0.028px">16/11/2025</div>
<div class="tx" style="left:329.11px;top:698.00px;font-size:14.5px;font-weight:700;color:#111;letter-spacing:0.898px">Drawin</div>
<div class="tx" style="left:531.60px;top:700.00px;font-size:14px;font-weight:400;color:#222;letter-spacing:0.957px">Skyline_Structures__855254</div>
<div class="tx" style="left:892.80px;top:700.00px;font-size:14px;font-weight:400;color:#333;letter-spacing:0.644px">Residential Project</div>
<div class="tx" style="left:1166.06px;top:700.00px;font-size:14px;font-weight:400;color:#222;letter-spacing:0.659px">No Reporter</div>
<div class="tx" style="left:1423.24px;top:700.00px;font-size:14px;font-weight:400;color:#222;letter-spacing:1.143px">Unassigned</div>
<div class="tx" style="left:1628.91px;top:700.00px;font-size:14px;font-weight:400;color:#222;letter-spacing:0.028px">16/11/2025</div>
<div class="tx" style="left:329.11px;top:756.00px;font-size:14.5px;font-weight:700;color:#111;letter-spacing:1.115px">Nancy</div>
<div class="tx" style="left:531.33px;top:758.00px;font-size:14px;font-weight:400;color:#222;letter-spacing:0.900px">Interior project</div>
<div class="tx" style="left:892.80px;top:758.00px;font-size:14px;font-weight:400;color:#333;letter-spacing:0.644px">Residential Project</div>
<div class="tx" style="left:1166.73px;top:758.00px;font-size:14px;font-weight:400;color:#222;letter-spacing:0.827px">Josh ray</div>
<div class="tx" style="left:1423.82px;top:758.00px;font-size:14px;font-weight:400;color:#222;letter-spacing:0.912px">Josh ray</div>
<div class="tx" style="left:1628.57px;top:758.00px;font-size:14px;font-weight:400;color:#222;letter-spacing:1.222px">22/09/2025</div>
<div class="tx" style="left:329.34px;top:814.00px;font-size:14.5px;font-weight:700;color:#111;letter-spacing:0.615px">Shreya</div>
<div class="tx" style="left:531.60px;top:816.00px;font-size:14px;font-weight:400;color:#222;letter-spacing:0.973px">Skyline_Structures__963454</div>
<div class="tx" style="left:892.73px;top:816.00px;font-size:14px;font-weight:400;color:#333;letter-spacing:0.759px">Interior Design</div>
<div class="tx" style="left:1166.55px;top:816.00px;font-size:14px;font-weight:400;color:#222;letter-spacing:0.000px">T</div>
<div class="tx" style="left:1177.80px;top:816.00px;font-size:14px;font-weight:400;color:#222;letter-spacing:0.000px">R</div>
<div class="tx" style="left:1423.82px;top:816.00px;font-size:14px;font-weight:400;color:#222;letter-spacing:0.912px">Josh ray</div>
<div class="tx" style="left:1628.65px;top:816.00px;font-size:14px;font-weight:400;color:#222;letter-spacing:0.422px">07/11/2025</div>
<div class="tx" style="left:329.11px;top:872.00px;font-size:14.5px;font-weight:700;color:#111;letter-spacing:0.766px">Deepthi</div>
<div class="tx" style="left:531.60px;top:874.00px;font-size:14px;font-weight:400;color:#222;letter-spacing:0.824px">Skyline_Structures__414498</div>
<div class="tx" style="left:893.25px;top:874.00px;font-size:14px;font-weight:400;color:#333;letter-spacing:0.996px">Commercial Project</div>
<div class="tx" style="left:1166.06px;top:874.00px;font-size:14px;font-weight:400;color:#222;letter-spacing:0.659px">No Reporter</div>
<div class="tx" style="left:1423.82px;top:874.00px;font-size:14px;font-weight:400;color:#222;letter-spacing:0.912px">Josh ray</div>
<div class="tx" style="left:1628.65px;top:874.00px;font-size:14px;font-weight:400;color:#222;letter-spacing:0.422px">07/11/2025</div>
<div class="tx" style="left:329.11px;top:930.00px;font-size:14.5px;font-weight:700;color:#2b96e0;letter-spacing:0.409px">Neha Joshi</div>
<div class="tx" style="left:531.60px;top:932.00px;font-size:14px;font-weight:400;color:#2b96e0;letter-spacing:0.969px">Skyline_Structures__392698</div>
<div class="tx" style="left:892.80px;top:932.00px;font-size:14px;font-weight:400;color:#333;letter-spacing:0.644px">Residential Project</div>
<div class="tx" style="left:1166.73px;top:932.00px;font-size:14px;font-weight:400;color:#222;letter-spacing:0.896px">Joe Smith</div>
<div class="tx" style="left:1423.24px;top:932.00px;font-size:14px;font-weight:400;color:#222;letter-spacing:1.143px">Unassigned</div>
<div class="tx" style="left:1628.57px;top:932.00px;font-size:14px;font-weight:400;color:#222;letter-spacing:1.222px">22/09/2025</div>
<div class="abs" style="left:1863px;top:916px;width:24px;height:24px;background:#3da2fb"></div>
<div class="abs" style="left:1873px;top:932.6px;width:4px;height:4px;border-radius:50%;background:#fff"></div>
<div class="abs" style="left:1873px;top:938.4px;width:4px;height:4px;border-radius:50%;background:#fff"></div>
<div class="abs" style="left:1825px;top:868px;width:60px;height:60px;background:#0565c8;border-radius:30px 7px 30px 30px;box-shadow:0 3px 8px rgba(0,0,0,.3)"></div>
<svg class="abs" style="left:1800px;top:850px" width="95" height="90" viewBox="0 0 992 940" ><path d="M505,420 H650 Q698,420 698,468 V548 Q698,596 650,596 H458 V468 Q458,420 505,420Z" fill="#fff"/><rect x="500" y="472" width="158" height="17" rx="6" fill="#0565c8"/><rect x="500" y="524" width="108" height="17" rx="6" fill="#0565c8"/></svg>
<svg class="abs" style="left:1201.3px;top:912.4px" width="14" height="22" viewBox="0 0 14 22" ><path d="M1,1 V16.5 L4.6,13.2 L7.4,19.6 L9.8,18.5 L7,12.4 H12Z" fill="#fff" stroke="#222" stroke-width="1"/></svg>
</body>
</html>
